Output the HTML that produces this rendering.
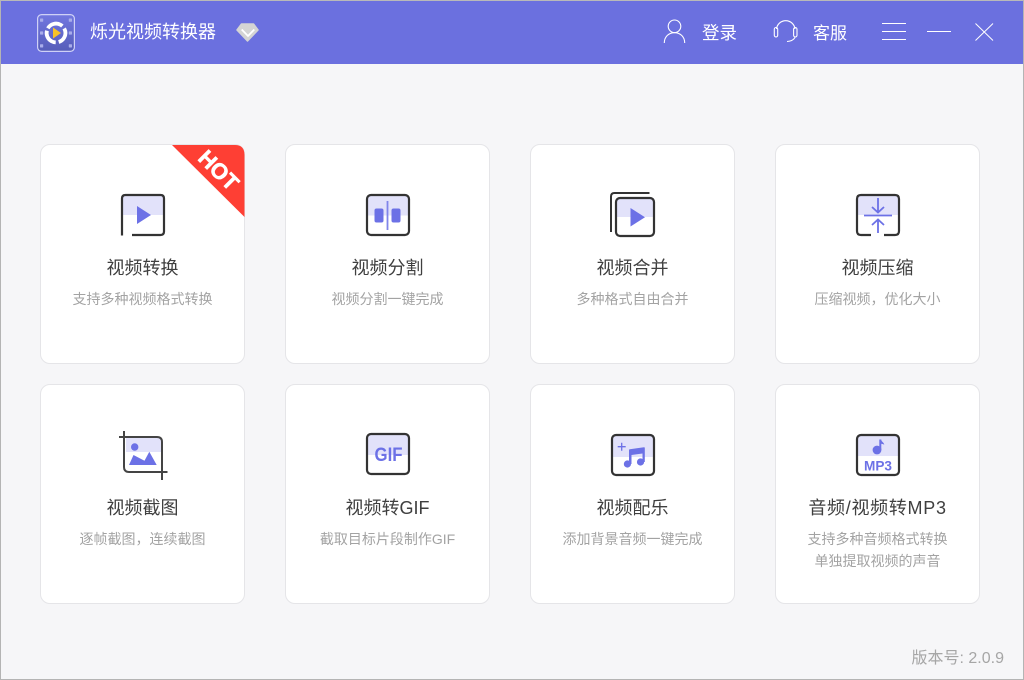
<!DOCTYPE html>
<html lang="zh">
<head>
<meta charset="utf-8">
<title>烁光视频转换器</title>
<style>
html,body{margin:0;padding:0;width:1024px;height:680px;overflow:hidden;background:#f6f6f8;font-family:"Liberation Sans","Noto Sans CJK SC",sans-serif}
#win{position:absolute;left:0;top:0;width:1024px;height:680px;box-sizing:border-box;border:1px solid #b4b4b4;border-top-color:#b9b9b9}
#bar{position:absolute;left:1px;top:1px;width:1022px;height:63px;background:#6b70df}
.t{position:absolute;white-space:nowrap;color:#fff}
.card{position:absolute;width:205px;height:220px;box-sizing:border-box;background:#fff;border:1px solid #e5e5e8;border-radius:10px;overflow:hidden;text-align:center}
.card b{position:absolute;left:0;right:0;top:110px;height:26px;line-height:26px;font-size:18px;font-weight:400;color:#3f3f3f}
.card p{position:absolute;left:0;right:0;top:143px;margin:0;line-height:22px;font-size:14px;color:#a3a3a3}
#art{position:absolute;left:0;top:0}
</style>
</head>
<body>
<div id="win"></div>
<div id="bar"></div>
<div class="t" style="left:90px;top:19px;font-size:18px;line-height:26px">烁光视频转换器</div>
<div class="t" style="left:702px;top:21px;font-size:17.5px;line-height:25px">登录</div>
<div class="t" style="left:813px;top:21px;font-size:17px;line-height:25px">客服</div>

<div class="card" style="left:40px;top:144px"><b>视频转换</b><p>支持多种视频格式转换</p></div>
<div class="card" style="left:285px;top:144px"><b>视频分割</b><p>视频分割一键完成</p></div>
<div class="card" style="left:530px;top:144px"><b>视频合并</b><p>多种格式自由合并</p></div>
<div class="card" style="left:775px;top:144px"><b>视频压缩</b><p>压缩视频，优化大小</p></div>
<div class="card" style="left:40px;top:384px"><b>视频截图</b><p>逐帧截图，连续截图</p></div>
<div class="card" style="left:285px;top:384px"><b>视频转GIF</b><p>截取目标片段制作GIF</p></div>
<div class="card" style="left:530px;top:384px"><b>视频配乐</b><p>添加背景音频一键完成</p></div>
<div class="card" style="left:775px;top:384px"><b style="letter-spacing:.7px">音频/视频转MP3</b><p>支持多种音频格式转换<br>单独提取视频的声音</p></div>

<div class="t" style="right:20px;top:647px;font-size:16px;line-height:24px;color:#a6a6a6">版本号: 2.0.9</div>

<svg id="art" width="1024" height="680" viewBox="0 0 1024 680" xmlns="http://www.w3.org/2000/svg">
<defs>
<linearGradient id="lg" x1="0" y1="0" x2="0" y2="1"><stop offset="0" stop-color="#7277e0"/><stop offset="1" stop-color="#565db9"/></linearGradient>
</defs>

<!-- logo -->
<rect x="37.600" y="14.600" width="36.800" height="36.800" rx="4" fill="url(#lg)" stroke="#cfd1f6" stroke-width="1.200"/>
<g fill="#a9adea">
<rect x="40" y="18.500" width="3.200" height="3.200" rx=".6"/><rect x="40" y="31.400" width="3.200" height="3.200" rx=".6"/><rect x="40" y="44.300" width="3.200" height="3.200" rx=".6"/>
<rect x="68.800" y="18.500" width="3.200" height="3.200" rx=".6"/><rect x="68.800" y="31.400" width="3.200" height="3.200" rx=".6"/><rect x="68.800" y="44.300" width="3.200" height="3.200" rx=".6"/>
</g>
<circle cx="56" cy="33" r="9.400" fill="none" stroke="#fff" stroke-width="3.800" stroke-dasharray="16.700 3" transform="rotate(-150 56 33)"/>
<path d="M53 27.500L61 33L53 38.500Z" fill="#f8c227"/>

<!-- diamond -->
<path d="M241.500 24H253.500L258 30L247.500 41L237 30Z" fill="#d4d4d4" stroke="#d4d4d4" stroke-width="1.500" stroke-linejoin="round"/>
<path d="M241.700 29.500L248 36L254.300 29.500" fill="none" stroke="#fff" stroke-width="1.800"/>

<!-- user -->
<g fill="none" stroke="#fff" stroke-width="1.100">
<circle cx="674.500" cy="26.300" r="6.300"/>
<path d="M664.300 43C664.300 36.500 669 32.700 674.500 32.700C680 32.700 684.700 36.500 684.700 43"/>
<!-- headset -->
<path d="M776.500 29A9.300 9.300 0 0 1 795 29"/>
<rect x="774.300" y="27.500" width="3.400" height="9.500" rx="1.700"/>
<rect x="793.600" y="27.500" width="3.400" height="9.500" rx="1.700"/>
<path d="M795 37.500C793.500 40 791 41.300 787 41.500"/>
</g>
<!-- window controls -->
<g stroke="#fff" stroke-width="1" fill="none">
<path d="M882 23.500H906M882 31.500H906M882 39.500H906"/>
<path d="M927 31.500H951"/>
<path d="M975.500 23.500L993 40.500M993 23.500L975.500 40.500"/>
</g>

<!-- HOT -->
<path d="M172 145H235Q244.500 145 244.500 155V217Z" fill="#fe3f34"/>
<text x="219" y="178" transform="rotate(45 219 170)" text-anchor="middle" font-family="Liberation Sans" font-weight="700" font-size="22" fill="#fff" stroke="#fff" stroke-width=".6">HOT</text>

<!-- 1 convert -->
<path d="M123 196H163V215H123Z" fill="#e2e2fa"/>
<path d="M122 235.500V198.500Q122 195 125.500 195H160.500Q164 195 164 198.500V231.500Q164 235 160.500 235H132" fill="none" stroke="#333" stroke-width="2.200"/>
<path d="M137 206L151 215L137 224Z" fill="#6c71e6"/>

<!-- 2 split -->
<path d="M368 195H408V215.500H368Z" fill="#e2e2fa"/>
<rect x="367" y="195" width="42" height="40" rx="4" fill="none" stroke="#333" stroke-width="2.200"/>
<rect x="374.500" y="208.500" width="9" height="14" rx="2" fill="#6c71e6"/>
<rect x="391.500" y="208.500" width="9" height="14" rx="2" fill="#6c71e6"/>
<path d="M387.500 201V230" stroke="#8085ea" stroke-width="1.800"/>

<!-- 3 merge -->
<path d="M617 198H654V217H617Z" fill="#e2e2fa"/>
<rect x="616" y="198" width="38" height="38" rx="4" fill="none" stroke="#333" stroke-width="2.200"/>
<path d="M611 232V196.500Q611 193 614.500 193H649.500" fill="none" stroke="#333" stroke-width="2"/>
<path d="M630.500 208L645 217.300L630.500 226.500Z" fill="#6c71e6"/>

<!-- 4 compress -->
<path d="M858 195H899V215H858Z" fill="#e2e2fa"/>
<path d="M871 235H861Q857 235 857 231V199Q857 195 861 195H895Q899 195 899 199V231Q899 235 895 235H884" fill="none" stroke="#333" stroke-width="2.200"/>
<g fill="none" stroke="#6c71e6" stroke-width="1.800">
<path d="M864 215.500H892"/>
<path d="M878 198V212M872 207L878 212.500L884 207"/>
<path d="M878 233V219.500M872 225L878 219.500L884 225"/>
</g>

<!-- 5 screenshot -->
<path d="M126 438H161V452H126Z" fill="#e2e2fa"/>
<path d="M119 437H157Q162 437 162 442V480" fill="none" stroke="#444" stroke-width="2"/>
<path d="M124 431V467Q124 472 129 472H167.500" fill="none" stroke="#444" stroke-width="2"/>
<circle cx="134.700" cy="447" r="3.700" fill="#6c71e6"/>
<path d="M129 465L133.500 455L144.500 460.700L149.300 451.700L156.700 465Z" fill="#6c71e6"/>

<!-- 6 GIF -->
<path d="M368 434.500H408V455H368Z" fill="#e2e2fa"/>
<rect x="367" y="434" width="42" height="40" rx="4" fill="none" stroke="#333" stroke-width="2.200"/>
<text x="374.500" y="461" font-family="Liberation Sans" font-weight="700" font-size="19" fill="#6c71e6" textLength="28" lengthAdjust="spacingAndGlyphs">GIF</text>

<!-- 7 music -->
<path d="M613 435H654V457H613Z" fill="#e2e2fa"/>
<rect x="612" y="435" width="42" height="40" rx="4" fill="none" stroke="#333" stroke-width="2.200"/>
<path d="M621.700 442.700V450.700M617.700 446.700H625.700" stroke="#6c71e6" stroke-width="1.300"/>
<circle cx="627.400" cy="464" r="3.600" fill="#6c71e6"/>
<circle cx="640.500" cy="462" r="3.600" fill="#6c71e6"/>
<path d="M629 464V450Q629 449.300 629.800 449.200L644 447.300Q644.800 447.300 644.800 448V462H642.500V453.500L631.500 455V464Z" fill="#6c71e6"/>

<!-- 8 MP3 -->
<path d="M858 435H899V456H858Z" fill="#e2e2fa"/>
<rect x="857" y="435" width="42" height="40" rx="4" fill="none" stroke="#333" stroke-width="2.200"/>
<circle cx="877" cy="450" r="4.400" fill="#6c71e6"/>
<path d="M879.300 450V439.500H881.300C881.300 442 883.800 442 884.300 444.800C882.800 443.800 882.100 443.900 881.300 443.700V450Z" fill="#6c71e6"/>
<text x="864" y="470.300" font-family="Liberation Sans" font-weight="700" font-size="14" fill="#6c71e6" textLength="28" lengthAdjust="spacingAndGlyphs">MP3</text>
</svg>
</body>
</html>
